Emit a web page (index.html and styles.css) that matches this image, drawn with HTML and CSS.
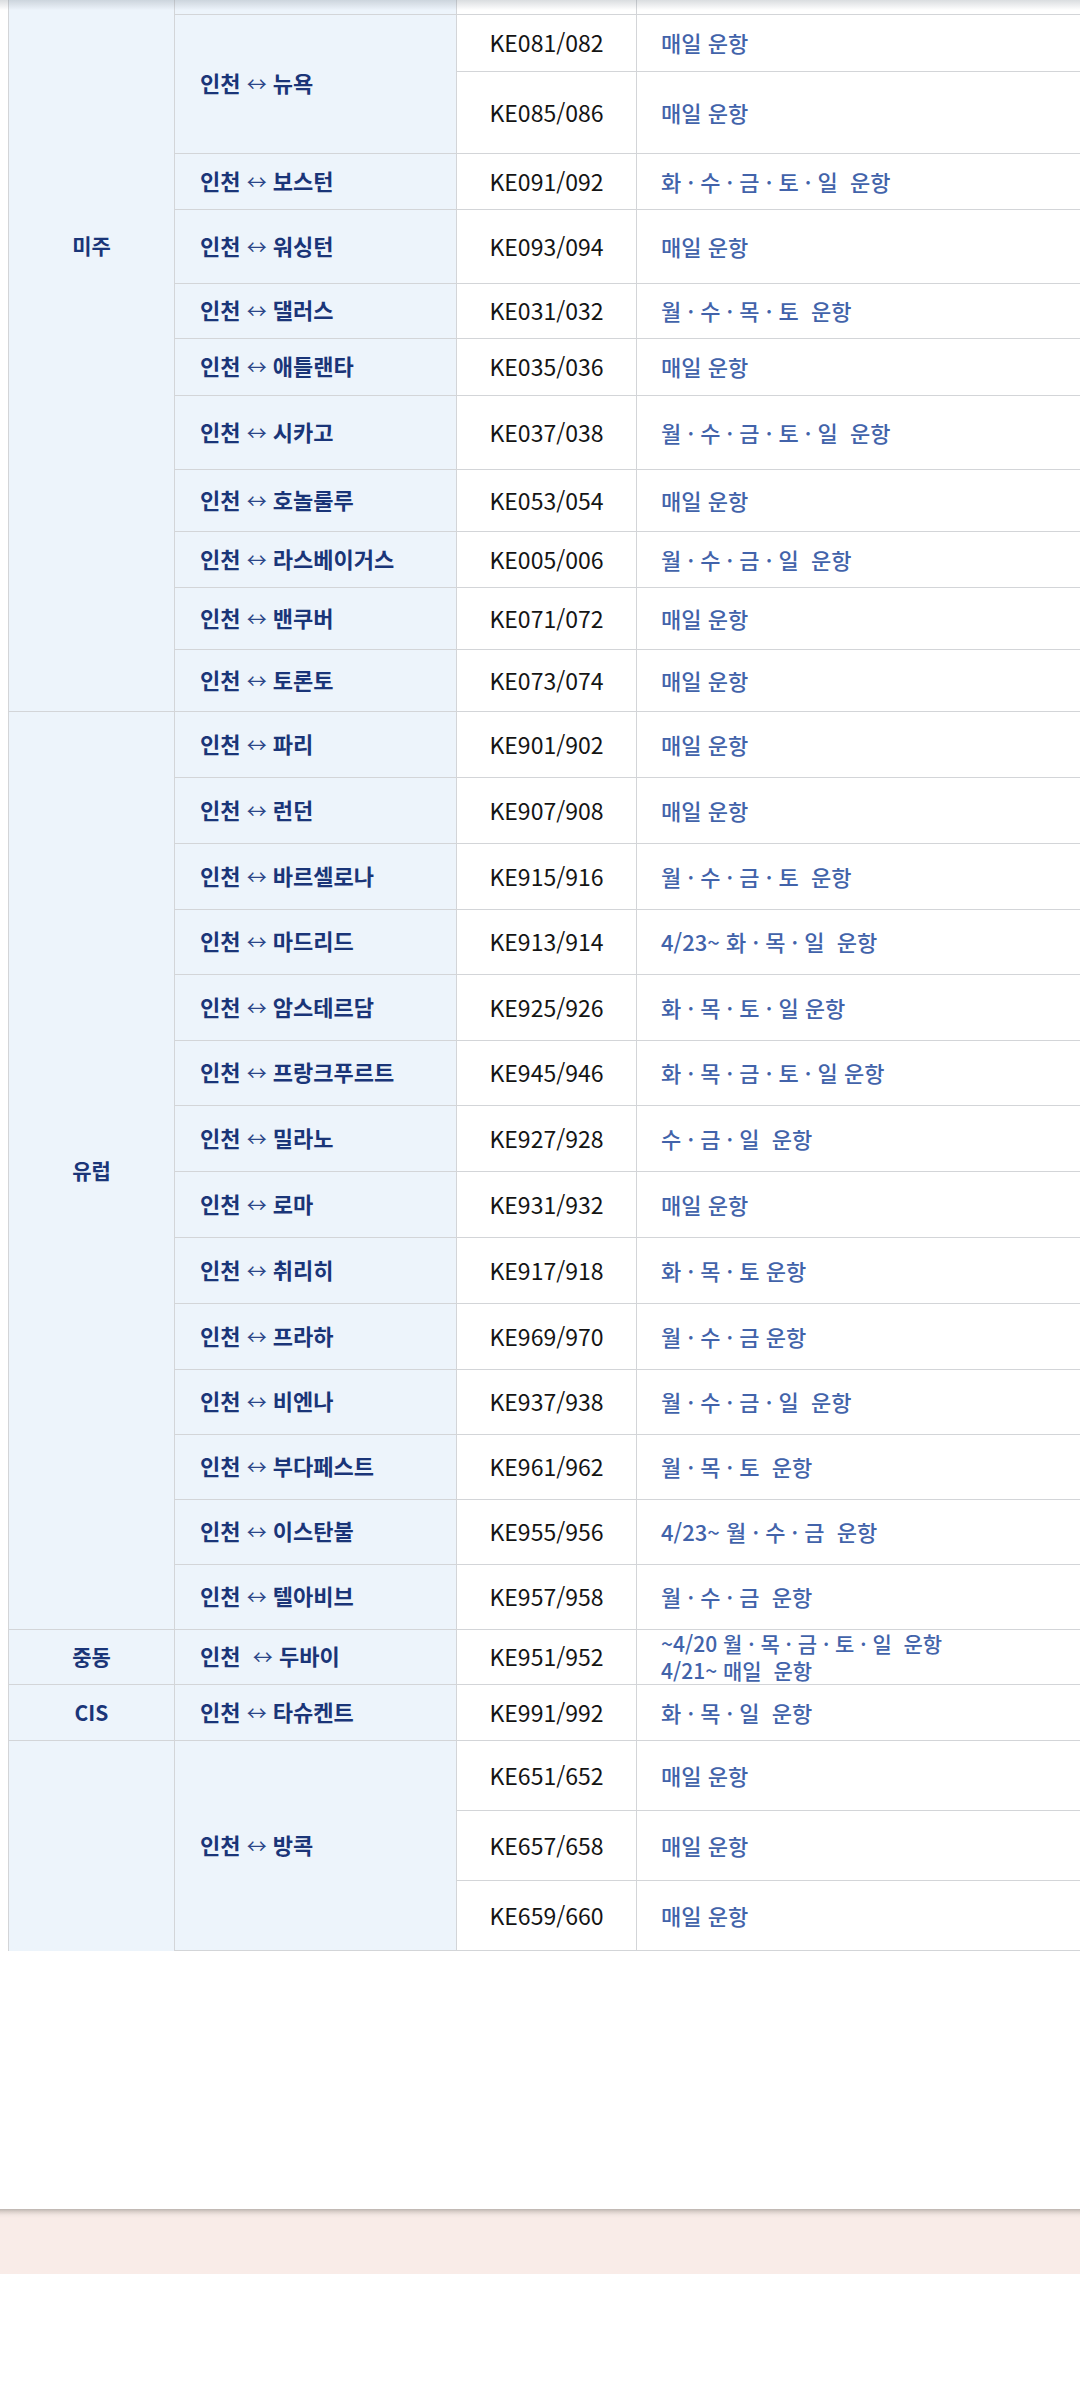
FILE: index.html
```html
<!DOCTYPE html>
<html lang="ko">
<head>
<meta charset="utf-8">
<title>운항 스케줄</title>
<link rel="stylesheet" href="styles.css">
</head>
<body>
<div class="topshade"></div>
<main class="page">
  <table class="sched">
    <colgroup>
      <col class="c1"><col class="c2"><col class="c3"><col class="c4">
    </colgroup>
    <tbody>
      <tr class="h235">
        <td class="region" rowspan="12">미주</td>
        <td class="route"></td>
        <td class="flt"></td>
        <td class="sch"></td>
      </tr>
      <tr class="h57">
        <td class="route" rowspan="2">인천 <span class="arr">↔</span> 뉴욕</td>
        <td class="flt">KE081/082</td>
        <td class="sch">매일 운항</td>
      </tr>
      <tr class="h82">
        <td class="flt">KE085/086</td>
        <td class="sch">매일 운항</td>
      </tr>
      <tr class="h56">
        <td class="route">인천 <span class="arr">↔</span> 보스턴</td>
        <td class="flt">KE091/092</td>
        <td class="sch">화 · 수 · 금 · 토 · 일&nbsp; 운항</td>
      </tr>
      <tr class="h74">
        <td class="route">인천 <span class="arr">↔</span> 워싱턴</td>
        <td class="flt">KE093/094</td>
        <td class="sch">매일 운항</td>
      </tr>
      <tr class="h55">
        <td class="route">인천 <span class="arr">↔</span> 댈러스</td>
        <td class="flt">KE031/032</td>
        <td class="sch">월 · 수 · 목 · 토&nbsp; 운항</td>
      </tr>
      <tr class="h57">
        <td class="route">인천 <span class="arr">↔</span> 애틀랜타</td>
        <td class="flt">KE035/036</td>
        <td class="sch">매일 운항</td>
      </tr>
      <tr class="h74">
        <td class="route">인천 <span class="arr">↔</span> 시카고</td>
        <td class="flt">KE037/038</td>
        <td class="sch">월 · 수 · 금 · 토 · 일&nbsp; 운항</td>
      </tr>
      <tr class="h62">
        <td class="route">인천 <span class="arr">↔</span> 호놀룰루</td>
        <td class="flt">KE053/054</td>
        <td class="sch">매일 운항</td>
      </tr>
      <tr class="h56">
        <td class="route">인천 <span class="arr">↔</span> 라스베이거스</td>
        <td class="flt">KE005/006</td>
        <td class="sch">월 · 수 · 금 · 일&nbsp; 운항</td>
      </tr>
      <tr class="h62">
        <td class="route">인천 <span class="arr">↔</span> 밴쿠버</td>
        <td class="flt">KE071/072</td>
        <td class="sch">매일 운항</td>
      </tr>
      <tr class="h62">
        <td class="route">인천 <span class="arr">↔</span> 토론토</td>
        <td class="flt">KE073/074</td>
        <td class="sch">매일 운항</td>
      </tr>

      <tr class="h66">
        <td class="region" rowspan="14">유럽</td>
        <td class="route">인천 <span class="arr">↔</span> 파리</td>
        <td class="flt">KE901/902</td>
        <td class="sch">매일 운항</td>
      </tr>
      <tr class="h66">
        <td class="route">인천 <span class="arr">↔</span> 런던</td>
        <td class="flt">KE907/908</td>
        <td class="sch">매일 운항</td>
      </tr>
      <tr class="h66">
        <td class="route">인천 <span class="arr">↔</span> 바르셀로나</td>
        <td class="flt">KE915/916</td>
        <td class="sch">월 · 수 · 금 · 토&nbsp; 운항</td>
      </tr>
      <tr class="h65">
        <td class="route">인천 <span class="arr">↔</span> 마드리드</td>
        <td class="flt">KE913/914</td>
        <td class="sch">4/23~ 화 · 목 · 일&nbsp; 운항</td>
      </tr>
      <tr class="h66">
        <td class="route">인천 <span class="arr">↔</span> 암스테르담</td>
        <td class="flt">KE925/926</td>
        <td class="sch">화 · 목 · 토 · 일 운항</td>
      </tr>
      <tr class="h65">
        <td class="route">인천 <span class="arr">↔</span> 프랑크푸르트</td>
        <td class="flt">KE945/946</td>
        <td class="sch">화 · 목 · 금 · 토 · 일 운항</td>
      </tr>
      <tr class="h66">
        <td class="route">인천 <span class="arr">↔</span> 밀라노</td>
        <td class="flt">KE927/928</td>
        <td class="sch">수 · 금 · 일&nbsp; 운항</td>
      </tr>
      <tr class="h66">
        <td class="route">인천 <span class="arr">↔</span> 로마</td>
        <td class="flt">KE931/932</td>
        <td class="sch">매일 운항</td>
      </tr>
      <tr class="h66">
        <td class="route">인천 <span class="arr">↔</span> 취리히</td>
        <td class="flt">KE917/918</td>
        <td class="sch">화 · 목 · 토 운항</td>
      </tr>
      <tr class="h66">
        <td class="route">인천 <span class="arr">↔</span> 프라하</td>
        <td class="flt">KE969/970</td>
        <td class="sch">월 · 수 · 금 운항</td>
      </tr>
      <tr class="h65">
        <td class="route">인천 <span class="arr">↔</span> 비엔나</td>
        <td class="flt">KE937/938</td>
        <td class="sch">월 · 수 · 금 · 일&nbsp; 운항</td>
      </tr>
      <tr class="h65">
        <td class="route">인천 <span class="arr">↔</span> 부다페스트</td>
        <td class="flt">KE961/962</td>
        <td class="sch">월 · 목 · 토&nbsp; 운항</td>
      </tr>
      <tr class="h65">
        <td class="route">인천 <span class="arr">↔</span> 이스탄불</td>
        <td class="flt">KE955/956</td>
        <td class="sch">4/23~ 월 · 수 · 금&nbsp; 운항</td>
      </tr>
      <tr class="h65">
        <td class="route">인천 <span class="arr">↔</span> 텔아비브</td>
        <td class="flt">KE957/958</td>
        <td class="sch">월 · 수 · 금&nbsp; 운항</td>
      </tr>

      <tr class="h55">
        <td class="region">중동</td>
        <td class="route">인천&nbsp; <span class="arr">↔</span> 두바이</td>
        <td class="flt">KE951/952</td>
        <td class="sch two">~4/20 월 · 목 · 금 · 토 · 일&nbsp; 운항<br>4/21~ 매일&nbsp; 운항</td>
      </tr>
      <tr class="h56">
        <td class="region cis">CIS</td>
        <td class="route">인천 <span class="arr">↔</span> 타슈켄트</td>
        <td class="flt">KE991/992</td>
        <td class="sch">화 · 목 · 일&nbsp; 운항</td>
      </tr>

      <tr class="h70">
        <td class="region open" rowspan="3"></td>
        <td class="route" rowspan="3">인천 <span class="arr">↔</span> 방콕</td>
        <td class="flt">KE651/652</td>
        <td class="sch">매일 운항</td>
      </tr>
      <tr class="h70">
        <td class="flt">KE657/658</td>
        <td class="sch">매일 운항</td>
      </tr>
      <tr class="h70">
        <td class="flt">KE659/660</td>
        <td class="sch">매일 운항</td>
      </tr>
    </tbody>
  </table>
</main>
<footer class="band"></footer>
</body>
</html>
```
FILE: styles.css
```css
html, body {
  margin: 0;
  padding: 0;
  background: #ffffff;
  overflow-x: hidden;
}

body {
  width: 1080px;
  font-family: "Noto Sans CJK KR", "Noto Sans", sans-serif;
}

.topshade {
  position: fixed;
  top: 0;
  left: 0;
  right: 0;
  height: 10px;
  background: linear-gradient(to bottom, rgba(120, 130, 140, 0.28), rgba(120, 130, 140, 0));
  z-index: 5;
  pointer-events: none;
}

.page {
  padding-left: 8px;
  margin-top: -221px;
}

.sched {
  border-collapse: collapse;
  table-layout: fixed;
  width: 1128px;
}

.c1 { width: 166px; }
.c2 { width: 282px; }
.c3 { width: 180px; }
.c4 { width: 500px; }

.sched td {
  border: 1px solid #d3d5d8;
  padding: 0 0 2px 0;
  vertical-align: middle;
  line-height: 26px;
}

.region {
  background: #edf4fb;
  text-align: center;
  font-weight: 700;
  font-size: 21px;
  color: #1a3578;
}

.region.open {
  border-bottom-style: hidden;
}

.route {
  background: #edf4fb;
  padding-left: 25px !important;
  font-weight: 700;
  font-size: 22px;
  color: #1a3578;
  white-space: nowrap;
}

.arr {
  font-weight: 400;
  font-size: 20px;
  color: #2b4688;
}

.flt {
  background: #ffffff;
  text-align: center;
  font-size: 23px;
  color: #141414;
}

.sch {
  background: #ffffff;
  padding-left: 24px !important;
  font-size: 22px;
  font-weight: 500;
  color: #4263aa;
  white-space: nowrap;
}

.sch.two {
  font-size: 21px;
  line-height: 27px;
  padding-bottom: 0 !important;
}

.h235 { height: 235px; }
.h82 { height: 82px; }
.h74 { height: 74px; }
.h70 { height: 70px; }
.h66 { height: 66px; }
.h65 { height: 65px; }
.h62 { height: 62px; }
.h57 { height: 57px; }
.h56 { height: 56px; }
.h55 { height: 55px; }

.band {
  margin-top: 258px;
  height: 65px;
  background: linear-gradient(to bottom, #bdb5b0 0px, #ddd2cd 3px, #f2e6e2 6px, #f9ece8 9px, #f9ece8 100%);
}
```
